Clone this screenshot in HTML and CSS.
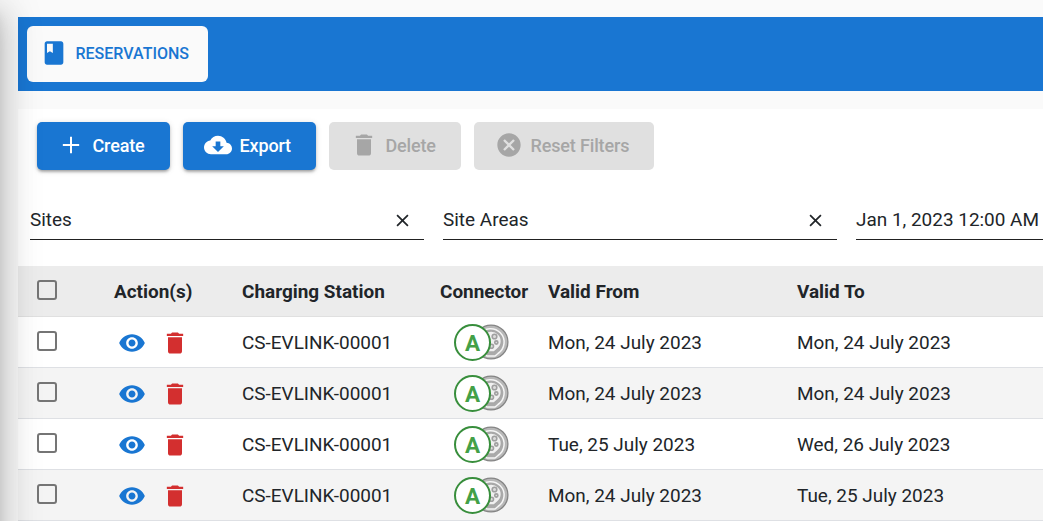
FILE: index.html
```
<!DOCTYPE html>
<html lang="en">
<head>
<meta charset="utf-8">
<title>Reservations</title>
<link rel="stylesheet" href="styles.css">
</head>
<body>
<svg class="defs" aria-hidden="true">
  <symbol id="book" viewBox="0 0 24 24"><path d="M18 2H6c-1.1 0-2 .9-2 2v16c0 1.1.9 2 2 2h12c1.1 0 2-.9 2-2V4c0-1.100-.9-2-2-2zM6 4h5v8l-2.500-1.500L6 12V4z"/></symbol>
  <symbol id="plus" viewBox="0 0 24 24"><path d="M19 12.850h-6.150V19h-1.700v-6.150H5v-1.700h6.150V5h1.700v6.150H19z"/></symbol>
  <symbol id="cloud" viewBox="0 0 24 24"><path d="M19.350 10.040C18.670 6.590 15.640 4 12 4 9.110 4 6.600 5.640 5.350 8.040 2.340 8.360 0 10.910 0 14c0 3.310 2.690 6 6 6h13c2.760 0 5-2.240 5-5 0-2.640-2.050-4.780-4.650-4.960zM17 13l-5 5-5-5h3V9h4v4h3z"/></symbol>
  <symbol id="trash" viewBox="0 0 24 24"><path d="M6 19c0 1.100.9 2 2 2h8c1.100 0 2-.9 2-2V7H6v12zM19 4h-3.500l-1-1h-5l-1 1H5v2h14V4z"/></symbol>
  <symbol id="cancel" viewBox="0 0 24 24"><path d="M12 2C6.470 2 2 6.470 2 12s4.470 10 10 10 10-4.470 10-10S17.530 2 12 2zm5 13.590L15.590 17 12 13.410 8.410 17 7 15.590 10.590 12 7 8.410 8.410 7 12 10.590 15.590 7 17 8.410 13.410 12 17 15.590z"/></symbol>
  <symbol id="clear" viewBox="0 0 12 12"><path d="M1 1L11 11M11 1L1 11" fill="none" stroke="currentColor" stroke-width="1.600"/></symbol>
  <symbol id="eye" viewBox="0 0 24 24"><path d="M12 4.500C7 4.500 2.730 7.610 1 12c1.730 4.390 6 7.500 11 7.500s9.270-3.110 11-7.500c-1.730-4.390-6-7.500-11-7.500zM12 17c-2.760 0-5-2.240-5-5s2.240-5 5-5 5 2.240 5 5-2.240 5-5 5zm0-8c-1.660 0-3 1.340-3 3s1.340 3 3 3 3-1.340 3-3-1.340-3-3-3z"/></symbol>
  <symbol id="plug" viewBox="0 0 36 36">
    <circle cx="18" cy="18" r="16.900" fill="#b8b8b8" stroke="#858585" stroke-width="1.300"/>
    <path d="M12 30.500A13.500 13.500 0 1 1 25 29.500L22 32H14Z" fill="#aaa" stroke="#f5f5f5" stroke-width="1.500"/>
    <path d="M13 25.500A10 10 0 1 1 24.500 25L21 28H15Z" fill="#f0f0f0" stroke="#a8a8a8" stroke-width="1.500"/>
    <g fill="#ddd" stroke="#a0a0a0" stroke-width="1.600"><circle cx="21.500" cy="12.500" r="2.300"/><circle cx="23.300" cy="18.500" r="1.600"/><circle cx="18.500" cy="22.300" r="2"/><circle cx="14" cy="14" r="2"/></g>
  </symbol>
</svg>
<div class="sidenav-edge"></div>
<header class="tabs"><a class="tab"><svg><use href="#book"/></svg><span>RESERVATIONS</span></a></header>
<main class="card">
  <div class="toolbar">
    <button class="btn create"><svg><use href="#plus"/></svg><span>Create</span></button>
    <button class="btn export"><svg><use href="#cloud"/></svg><span>Export</span></button>
    <button class="btn delete" disabled><svg><use href="#trash"/></svg><span>Delete</span></button>
    <button class="btn reset" disabled><svg><use href="#cancel"/></svg><span>Reset Filters</span></button>
  </div>
  <div class="filters">
    <div class="filter"><span>Sites</span><svg><use href="#clear"/></svg></div>
    <div class="filter"><span>Site Areas</span><svg><use href="#clear"/></svg></div>
    <div class="filter date"><span>Jan 1, 2023 12:00 AM</span></div>
  </div>
  <div class="table">
    <div class="row head"><i class="check"></i><span>Action(s)</span><span class="station">Charging Station</span><span class="conn-title">Connector</span><span class="from">Valid From</span><span class="to">Valid To</span></div>
    <div class="row"><i class="check"></i><div class="actions"><svg class="view"><use href="#eye"/></svg><svg class="remove"><use href="#trash"/></svg></div><span class="station">CS-EVLINK-00001</span><div class="conn"><b>A</b><svg><use href="#plug"/></svg></div><span class="from">Mon, 24 July 2023</span><span class="to">Mon, 24 July 2023</span></div>
    <div class="row alt"><i class="check"></i><div class="actions"><svg class="view"><use href="#eye"/></svg><svg class="remove"><use href="#trash"/></svg></div><span class="station">CS-EVLINK-00001</span><div class="conn"><b>A</b><svg><use href="#plug"/></svg></div><span class="from">Mon, 24 July 2023</span><span class="to">Mon, 24 July 2023</span></div>
    <div class="row"><i class="check"></i><div class="actions"><svg class="view"><use href="#eye"/></svg><svg class="remove"><use href="#trash"/></svg></div><span class="station">CS-EVLINK-00001</span><div class="conn"><b>A</b><svg><use href="#plug"/></svg></div><span class="from">Tue, 25 July 2023</span><span class="to">Wed, 26 July 2023</span></div>
    <div class="row alt"><i class="check"></i><div class="actions"><svg class="view"><use href="#eye"/></svg><svg class="remove"><use href="#trash"/></svg></div><span class="station">CS-EVLINK-00001</span><div class="conn"><b>A</b><svg><use href="#plug"/></svg></div><span class="from">Mon, 24 July 2023</span><span class="to">Tue, 25 July 2023</span></div>
  </div>
</main>
</body>
</html>
```
FILE: styles.css
```
* { box-sizing: border-box; }
body {
  margin: 0;
  height: 521px;
  padding: 17px 0 0 18px;
  overflow: hidden;
  background: #fafafa;
  color: #212529;
  font: 18.95px/24px Roboto, sans-serif;
}
svg { fill: currentColor; flex: none; display: block; }
.defs { position: absolute; width: 0; height: 0; }
.sidenav-edge {
  position: absolute;
  z-index: 2;
  left: -300px;
  top: 0;
  width: 300px;
  height: 700px;
  pointer-events: none;
  box-shadow: 0 10px 13px -6px rgba(0,0,0,.2), 0 20px 31px 3px rgba(0,0,0,.14), 0 8px 39px 6px rgba(0,0,0,.12);
}
.tabs { height: 74px; padding: 9px; background: #1976d2; }
.tab {
  display: flex;
  align-items: center;
  width: 181px;
  height: 56px;
  padding-left: 13px;
  border-radius: 6px;
  background: #fafafa;
  color: #1976d2;
  font-size: 16px;
  font-weight: 500;
}
.tab svg { width: 28px; height: 28px; margin: -2px 7.500px 0 0; }
.card { height: 430px; margin-top: 18px; background: #fff; }
.toolbar { display: flex; gap: 13px; height: 75px; padding: 13px 19px; }
.btn {
  display: flex;
  align-items: center;
  height: 48px;
  padding: 0;
  border: 0;
  border-radius: 5px;
  background: #1976d2;
  color: #fff;
  font: 500 18px/24px Roboto, sans-serif;
  letter-spacing: -.15px;
  white-space: nowrap;
  box-shadow: 0 3px 3px -2px rgba(0,0,0,.2), 0 2px 3px rgba(0,0,0,.18), 0 1px 6px rgba(0,0,0,.12);
}
.btn:disabled { background: #e0e0e0; color: #a6a6a6; box-shadow: none; }
.btn svg { width: 28px; height: 28px; margin: -2px 7.500px 0 0; }
.create { width: 133px; padding-left: 20px; }
.export { width: 133px; padding-left: 21px; }
.delete { width: 132px; padding-left: 21px; }
.reset { width: 180px; padding-left: 21px; }
.filters { display: flex; gap: 19px; height: 82px; padding: 12px 0 0 12px; }
.filter {
  display: flex;
  flex: none;
  align-items: center;
  justify-content: space-between;
  width: 394px;
  height: 44px;
  padding: 4px 15px 0 0;
  border-bottom: 1px solid #212121;
}
.filter svg { width: 13px; height: 13px; margin-top: 2px; }
.date { flex: 1; width: auto; min-width: 0; padding-right: 0; white-space: nowrap; }
.row {
  display: grid;
  grid-template-columns: 77px 128px 198px 108px 249px 246px;
  align-items: center;
  height: 51px;
  padding-left: 19px;
  border-bottom: 1px solid #dee0e4;
  background: #fff;
  white-space: nowrap;
}
.row > span { padding-top: 2px; }
.alt { background: #f4f4f4; }
.head { background: #ececec; font-weight: 700; border-color: #e0e0e0; }
.check { width: 20px; height: 20px; margin-top: -3px; border: 2px solid #757575; border-radius: 3px; }
.actions { display: flex; gap: 15.500px; padding: 2px 0 0 3.500px; }
.actions svg { width: 28px; height: 28px; }
.view { color: #1976d2; }
.remove { color: #d32f2f; }
.conn { display: flex; align-items: center; padding-left: 14px; }
.conn b {
  z-index: 1;
  width: 37px;
  height: 37px;
  border: 2px solid #388e3c;
  border-radius: 50%;
  background: #fff;
  color: #43a047;
  font-size: 22.500px;
  line-height: 35px;
  text-align: center;
}
.conn svg { width: 36px; height: 36px; margin-left: -18.500px; }
```
